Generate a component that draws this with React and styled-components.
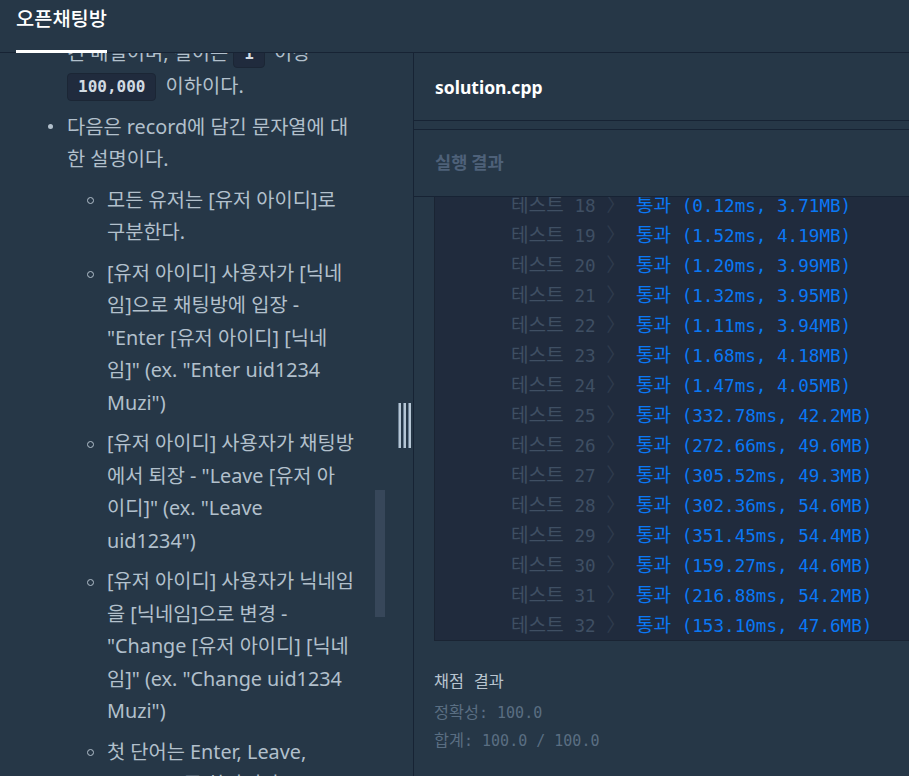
import React, { useLayoutEffect, useRef } from 'react';
import styled, { createGlobalStyle } from 'styled-components';

const GlobalStyle = createGlobalStyle`
  html, body {
    margin: 0;
    padding: 0;
    height: 100%;
    overflow: hidden;
    background: #263747;
  }
  #root {
    height: 100%;
  }
`;

const Page = styled.div`
  display: flex;
  flex-direction: column;
  height: 100vh;
  background: #263747;
  font-family: "Noto Sans", "Noto Sans CJK KR", sans-serif;
`;

const Header = styled.header`
  display: flex;
  height: 52px;
  flex-shrink: 0;
  padding-left: 16px;
  border-bottom: 1px solid #172334;
`;

const Tab = styled.div`
  position: relative;
  z-index: 1;
  box-sizing: border-box;
  height: 53px;
  margin-bottom: -1px;
  padding-top: 6px;
  border-bottom: 3px solid #ffffff;
  color: #ffffff;
  font-size: 19.8px;
  font-weight: 500;
  line-height: 24px;
  font-family: "Noto Sans CJK KR", sans-serif;
`;

const Main = styled.div`
  position: relative;
  display: flex;
  flex: 1;
  min-height: 0;
`;

const Description = styled.section`
  width: 414px;
  flex-shrink: 0;
  overflow-y: auto;
  scrollbar-width: none;
  border-right: 1px solid #172334;
  padding: 0 16px;
  box-sizing: border-box;
  &::-webkit-scrollbar {
    display: none;
  }
`;

const List = styled.ul`
  list-style: none;
  margin: 0;
  padding: 16px 0 40px ${(p) => (p.$nested ? '40px' : '51px')};
  ${(p) => p.$nested && 'padding-top: 0; padding-bottom: 0; margin-top: 8.4px;'}
  color: #b2c0cc;
  font-size: 19.8px;
  line-height: 32.4px;
`;

const Item = styled.li`
  position: relative;
  white-space: nowrap;
  & + & {
    margin-top: 8.4px;
  }
  &::before {
    content: '';
    position: absolute;
    top: 13.5px;
    box-sizing: border-box;
    border-radius: 50%;
    ${(p) =>
      p.$circle
        ? 'left: -20px; width: 7px; height: 7px; border: 1px solid #b2c0cc;'
        : 'left: -19.5px; width: 5px; height: 5px; background: #b2c0cc;'}
  }
`;

const Code = styled.code`
  display: inline-block;
  margin: 0 4px 0 0;
  padding: 0 10px;
  line-height: 26px;
  border: 1px solid #1b2635;
  border-radius: 4px;
  background: #202b3d;
  color: #d3dbe3;
  font-family: "DejaVu Sans Mono", monospace;
  font-size: 16px;
  font-weight: 600;
  vertical-align: 1px;
`;

const ScrollThumb = styled.div`
  position: absolute;
  left: 375px;
  top: 437px;
  width: 10px;
  height: 127px;
  background: #37475a;
`;

const ResizeHandle = styled.div`
  position: absolute;
  left: 398px;
  top: 350px;
  display: flex;
  gap: 2px;
  height: 45px;
`;

const Grip = styled.span`
  width: 3px;
  height: 100%;
  box-sizing: border-box;
  background: #b6c6d4;
  border-left: 1px solid #6d8195;
`;

const Right = styled.section`
  display: flex;
  flex-direction: column;
  flex: 1;
  min-width: 0;
`;

const FileBar = styled.div`
  display: flex;
  align-items: center;
  height: 67px;
  padding-left: 21px;
  border-bottom: 1px solid #172334;
  color: #ffffff;
  font-family: "Noto Sans", sans-serif;
  font-size: 17.5px;
  font-weight: 700;
`;

const EditorStrip = styled.div`
  height: 8px;
  border-bottom: 1px solid #172334;
`;

const ResultHeader = styled.div`
  display: flex;
  align-items: center;
  box-sizing: border-box;
  height: 67px;
  padding: 0 0 4px 21px;
  border-bottom: 1px solid #172334;
  color: #4e6179;
  font-family: "Noto Sans CJK KR", sans-serif;
  font-size: 17.6px;
  font-weight: 700;
`;

const Console = styled.div`
  flex: 1;
  padding-left: 20px;
`;

const ConsoleBox = styled.div`
  height: 443px;
  overflow: hidden;
  background: #202b3d;
  border-left: 1px solid #1a2433;
  border-bottom: 1px solid #1a2433;
  font-family: "DejaVu Sans Mono", "Noto Sans CJK KR", monospace;
  font-size: 17.6px;
`;

const Row = styled.div`
  height: 30px;
  line-height: 31px;
  padding-left: 76px;
  white-space: pre;
`;

// Hangul in the console font runs a little wider than the CJK fallback
const Wide = styled.span`
  font-size: 1.087em;
`;

const Label = styled.span`
  color: #3f4f63;
`;

const Chevron = styled.span`
  color: #2f3b4d;
`;

const Pass = styled.span`
  color: #0a78f5;
`;

const Score = styled.div`
  padding-top: 27px;
  font-family: "DejaVu Sans Mono", "Noto Sans CJK KR", monospace;
  font-size: 15px;
  line-height: 28px;
`;

const ScoreTitle = styled.div`
  color: #b8c4cf;
  margin-bottom: 3px;
  white-space: pre;
`;

const ScoreLine = styled.div`
  color: #5a6e82;
  white-space: pre;
`;

const results = [
  [18, '0.12ms', '3.71MB'],
  [19, '1.52ms', '4.19MB'],
  [20, '1.20ms', '3.99MB'],
  [21, '1.32ms', '3.95MB'],
  [22, '1.11ms', '3.94MB'],
  [23, '1.68ms', '4.18MB'],
  [24, '1.47ms', '4.05MB'],
  [25, '332.78ms', '42.2MB'],
  [26, '272.66ms', '49.6MB'],
  [27, '305.52ms', '49.3MB'],
  [28, '302.36ms', '54.6MB'],
  [29, '351.45ms', '54.4MB'],
  [30, '159.27ms', '44.6MB'],
  [31, '216.88ms', '54.2MB'],
  [32, '153.10ms', '47.6MB'],
];

export default function App() {
  const descRef = useRef(null);
  const anchorRef = useRef(null);
  const consoleRef = useRef(null);

  useLayoutEffect(() => {
    // restore the scroll positions seen in the capture
    const box = descRef.current;
    const anchor = anchorRef.current;
    if (box && anchor) {
      const offset = anchor.getBoundingClientRect().top - box.getBoundingClientRect().top;
      box.scrollTop = box.scrollTop + offset - 57.8;
    }
    if (consoleRef.current) consoleRef.current.scrollTop = 7;
  }, []);

  return (
    <Page>
      <GlobalStyle />
      <Header>
        <Tab>오픈채팅방</Tab>
      </Header>
      <Main>
        <Description ref={descRef}>
          <List>
            <Item>
              record는 다음과 같은 문자열이 담<br />
              긴 배열이며, 길이는 <Code>1</Code> 이상<br />
              <Code>100,000</Code> 이하이다.
            </Item>
            <Item ref={anchorRef}>
              다음은 record에 담긴 문자열에 대<br />
              한 설명이다.
              <List $nested>
                <Item $circle>
                  모든 유저는 [유저 아이디]로<br />
                  구분한다.
                </Item>
                <Item $circle>
                  [유저 아이디] 사용자가 [닉네<br />
                  임]으로 채팅방에 입장 -<br />
                  "Enter [유저 아이디] [닉네<br />
                  임]" (ex. "Enter uid1234<br />
                  Muzi")
                </Item>
                <Item $circle>
                  [유저 아이디] 사용자가 채팅방<br />
                  에서 퇴장 - "Leave [유저 아<br />
                  이디]" (ex. "Leave<br />
                  uid1234")
                </Item>
                <Item $circle>
                  [유저 아이디] 사용자가 닉네임<br />
                  을 [닉네임]으로 변경 -<br />
                  "Change [유저 아이디] [닉네<br />
                  임]" (ex. "Change uid1234<br />
                  Muzi")
                </Item>
                <Item $circle>
                  첫 단어는 Enter, Leave,<br />
                  Change 중 하나이다.
                </Item>
              </List>
            </Item>
          </List>
        </Description>
        <ScrollThumb />
        <ResizeHandle>
          <Grip />
          <Grip />
          <Grip />
        </ResizeHandle>
        <Right>
          <FileBar>solution.cpp</FileBar>
          <EditorStrip />
          <ResultHeader>실행 결과</ResultHeader>
          <Console>
            <ConsoleBox ref={consoleRef}>
              {results.map(([n, time, mem]) => (
                <Row key={n}>
                  <Label>
                    <Wide>테스트</Wide> {n}
                  </Label>{' '}
                  <Chevron>
                    <Wide>〉</Wide>
                  </Chevron>{' '}
                  <Pass>
                    <Wide>통과</Wide> ({time}, {mem})
                  </Pass>
                </Row>
              ))}
            </ConsoleBox>
            <Score>
              <ScoreTitle>
                <Wide>채점 결과</Wide>
              </ScoreTitle>
              <ScoreLine>
                <Wide>정확성</Wide>: 100.0
              </ScoreLine>
              <ScoreLine>
                <Wide>합계</Wide>: 100.0 / 100.0
              </ScoreLine>
            </Score>
          </Console>
        </Right>
      </Main>
    </Page>
  );
}
